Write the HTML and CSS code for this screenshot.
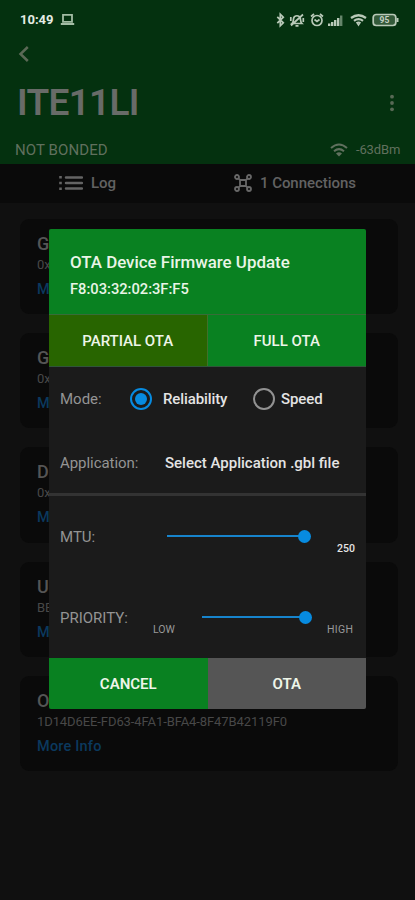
FILE: index.html
```html
<!DOCTYPE html>
<html lang="en">
<head>
<meta charset="utf-8">
<meta name="viewport" content="width=device-width">
<title>OTA Device Firmware Update</title>
<link rel="stylesheet" href="styles.css">
</head>
<body>
<div class="screen">
  <header class="appbar">
    <div class="status">
      <span class="time">10:49</span>
      <svg class="laptop" width="15" height="13" viewBox="0 0 15 13"><path d="M3 1.800h9v7H3zM.8 11h13.400" fill="none" stroke="#a3bca4" stroke-width="1.800"/></svg>
      <svg class="sysicons" width="123" height="16" viewBox="0 0 123 16">
        <g fill="none" stroke="#b9c9b8" stroke-width="1.700">
          <path d="M1.300 4.800l6 6-3 3V2.200l3 3-6 6"/>
          <path d="M16 11.500c1.600-1.500 1.200-3.500 1.700-5.500.9-3 5.600-3 6.500 0 .5 2 .2 4 1.700 5.500zM27 2.500L15 13.500M19.500 13.800h3M14.800 5v4M27.300 6v4"/>
          <circle cx="41" cy="8.500" r="5"/><path d="M38.500 7.500l2.500 2 2.500-2M35 4.500l3-2.500M47 4.500L44 2"/>
          <path d="M75 6q7.500-5.500 15 0M78 8.800q4.500-3.500 9 0M80.500 11.300q2-1.500 4 0" stroke-width="2.200"/>
          <rect x="97.200" y="2.500" width="22.600" height="11" rx="3" fill="#345a3a"/>
        </g>
        <path d="M52 11.500h2.400v2.500H52zM55 10h2.400v4H55zM58 8h2.400v6H58zM61 6h2.400v8H61z" fill="#b9c9b8"/><path d="M64 3.500h2.400V14H64z" fill="#65856a"/>
        <path d="M81 12h3l-1.500 2.500zM120.500 6h2v4h-2z" fill="#b9c9b8"/>
        <text class="battery" x="108.500" y="11.200" text-anchor="middle">95</text>
      </svg>
    </div>
    <div class="back"><svg width="12" height="18" viewBox="0 0 12 18"><path d="M9.800 2L2.500 9l7.300 7" fill="none" stroke="#5b6956" stroke-width="2.500"/></svg></div>
    <div class="titlebar"><h1>ITE11LI</h1><svg width="6" height="18" viewBox="0 0 6 18" fill="#586955"><circle cx="3" cy="2.700" r="1.900"/><circle cx="3" cy="9" r="1.900"/><circle cx="3" cy="15.300" r="1.900"/></svg></div>
    <div class="bond">
      <span class="bond-state">NOT BONDED</span>
      <svg class="wifi" width="18" height="14" viewBox="0 0 18 14"><path d="M1 5q8-7 16 0M4 8.300q5-4.300 10 0" fill="none" stroke="#60705e" stroke-width="2"/><path d="M6 10.400q3-2.200 6 0L9 13.500z" fill="#60705e"/></svg>
      <span class="rssi">-63dBm</span>
    </div>
  </header>
  <nav class="tabs">
    <div class="tab tab-log"><svg width="24" height="14" viewBox="0 0 24 14"><path d="M1.500 0v14" stroke="#646464" stroke-width="2.600" stroke-dasharray="2.600 3.100"/><path d="M7 1.500h16M7 7h16M7 12.500h16" stroke="#646464" stroke-width="2.500" stroke-linecap="round"/></svg><span class="log">Log</span></div>
    <div class="tab tab-conn"><svg width="18" height="18" viewBox="0 0 18 18" fill="none" stroke="#686868" stroke-width="1.800"><circle cx="3" cy="3" r="2"/><circle cx="15" cy="3" r="2"/><circle cx="3" cy="15" r="2"/><circle cx="15" cy="15" r="2"/><path d="M6 6h6v6H6zM4.400 4.400L6 6m6 0l1.600-1.600M6 12l-1.600 1.600M12 12l1.600 1.600"/></svg><span class="conn">1 Connections</span></div>
  </nav>
  <main class="services">
    <section class="card"><h2>G</h2><p>0x</p><a>M</a></section>
    <section class="card"><h2>G</h2><p>0x</p><a>M</a></section>
    <section class="card"><h2>D</h2><p>0x</p><a>M</a></section>
    <section class="card"><h2>U</h2><p>BE</p><a>M</a></section>
    <section class="card"><h2>O</h2><p class="uuid">1D14D6EE-FD63-4FA1-BFA4-8F47B42119F0</p><a class="more">More Info</a></section>
  </main>
</div>
<div class="dialog">
  <div class="dialog-head"><div class="dialog-title"><span>OTA Device Firmware Update</span></div><div class="mac"><span>F8:03:32:02:3F:F5</span></div></div>
  <div class="pair"><div class="btn partial">PARTIAL OTA</div><div class="btn full">FULL OTA</div></div>
  <div class="dialog-body">
    <div class="row mode"><span class="label">Mode:</span><i class="radio on"></i><span class="reliability">Reliability</span><i class="radio"></i><span class="speed">Speed</span></div>
    <div class="row application"><span class="label">Application:</span><span class="file">Select Application .gbl file</span></div>
    <div class="divider"></div>
    <div class="row mtu"><span class="label">MTU:</span><div class="slider"><i class="thumb"></i></div><span class="small value">250</span></div>
    <div class="row priority"><span class="label">PRIORITY:</span><span class="small low">LOW</span><div class="slider"><i class="thumb"></i></div><span class="small high">HIGH</span></div>
  </div>
  <div class="pair actions"><div class="btn cancel">CANCEL</div><div class="btn ota">OTA</div></div>
</div>
</body>
</html>
```
FILE: styles.css
```css
* { box-sizing: border-box; }
body { margin: 0; font-family: Roboto, sans-serif; background: #101010; }
h1, h2, p { margin: 0; }
svg { display: block; flex: none; }
i { display: block; flex: none; }
span { white-space: nowrap; flex: none; }
.screen { height: 900px; overflow: hidden; background: #101010; }

.appbar { height: 164px; background: #04310f; }
.status { height: 39px; display: flex; align-items: center; padding-left: 20px; }
.time { width: 40px; font-size: 13px; font-weight: 700; color: #e4ece3; }
.laptop { margin-right: 201px; }
.battery { font-size: 8.5px; font-weight: 700; fill: #c5d2c4; }
.back { height: 30px; display: flex; align-items: center; padding-left: 17.500px; }
.titlebar { height: 68px; display: flex; align-items: center; justify-content: space-between; padding: 0 20px 0 17px; }
h1 { font-size: 37px; line-height: 40px; font-weight: 600; letter-spacing: -.7px; color: #686b68; }
.bond { height: 25px; display: flex; align-items: center; padding-left: 15px; color: #60705e; }
.bond-state { width: 315px; font-size: 15px; letter-spacing: .1px; }
.rssi { margin-left: 8px; font-size: 13px; letter-spacing: -.15px; }

.tabs { height: 39px; padding-bottom: 1px; display: flex; align-items: center; background: #0a0a0a; color: #626262; font-size: 15px; font-weight: 500; }
.tab { display: flex; align-items: center; }
.tab-log { width: 234px; padding-left: 59px; gap: 8px; }
.tab-conn { gap: 8px; }
.conn { letter-spacing: -.05px; }

.services { padding: 16px 17px 0 20px; display: flex; flex-direction: column; gap: 19px; }
.card { height: 95.200px; padding: 15px 17px; border-radius: 9px; background: #0a0a0a; display: flex; flex-direction: column; }
.card h2 { height: 20px; line-height: 20px; font-size: 18px; font-weight: 500; color: #555; }
.card p { height: 21px; line-height: 21px; font-size: 13px; color: #484848; }
.card .uuid { letter-spacing: -.09px; }
.card a { height: 30px; line-height: 30px; font-size: 14.500px; font-weight: 500; letter-spacing: .2px; color: #0b395e; }

.dialog { position: absolute; left: 49px; top: 229px; width: 317px; height: 480px; background: #1b1b1b; border-radius: 2px; overflow: hidden; color: #e4e4e4; }
.dialog-head { height: 85px; background: #098121; padding: 20px 21px; color: #e9f5e7; }
.dialog-title { height: 27px; line-height: 27px; font-size: 16.900px; font-weight: 500; }
.mac { height: 27px; line-height: 27px; font-size: 14.700px; font-weight: 500; }
.pair { height: 53px; display: flex; border-top: 1px solid #376c38; border-bottom: 1px solid #30553a; }
.btn { width: 158.500px; display: flex; align-items: center; justify-content: center; font-size: 15px; font-weight: 500; color: #eef5e9; background: #098121; }
.partial { background: #286500; border-right: 1px solid #40702a; }
.actions { border: 0; height: 51px; }
.cancel { font-weight: 600; }
.ota { background: #555; font-weight: 600; }
.dialog-body { height: 291px; }
.row { display: flex; align-items: center; padding-left: 11px; font-size: 15px; }
.label { color: #949494; }
.mode { height: 64px; }
.mode .label { width: 70px; }
.radio { width: 22px; height: 22px; border: 2px solid #929292; border-radius: 50%; }
.on { border-color: #078be0; display: flex; align-items: center; justify-content: center; }
.on::before { content: ""; width: 12px; height: 12px; border-radius: 50%; background: #078be0; }
.reliability, .speed { font-weight: 500; letter-spacing: -.1px; }
.reliability { width: 80px; margin: 0 0 0 11px; }
.reliability + .radio { margin-left: 10px; }
.speed { margin-left: 6px; }
.application { height: 62px; padding-top: 2px; }
.application .label { width: 105px; letter-spacing: -.05px; }
.file { font-weight: 500; font-size: 15px; }
.divider { height: 3px; background: #333; }
.mtu { height: 80px; }
.mtu .label { width: 107px; padding-top: 1px; }
.slider { height: 2px; width: 137px; background: #1784cc; display: flex; align-items: center; justify-content: flex-end; flex: none; }
.thumb { width: 13px; height: 13px; margin-right: -6.500px; border-radius: 50%; background: #078be0; }
.small { font-size: 10.500px; }
.value { margin: 24px 0 0 33px; font-weight: 500; }
.priority { height: 82px; }
.priority .label { width: 93px; padding-top: 1px; }
.low, .high { color: #999; margin-top: 24px; }
.low { width: 49px; }
.priority .slider { width: 103px; }
.high { margin-left: 22px; letter-spacing: .3px; }
```
